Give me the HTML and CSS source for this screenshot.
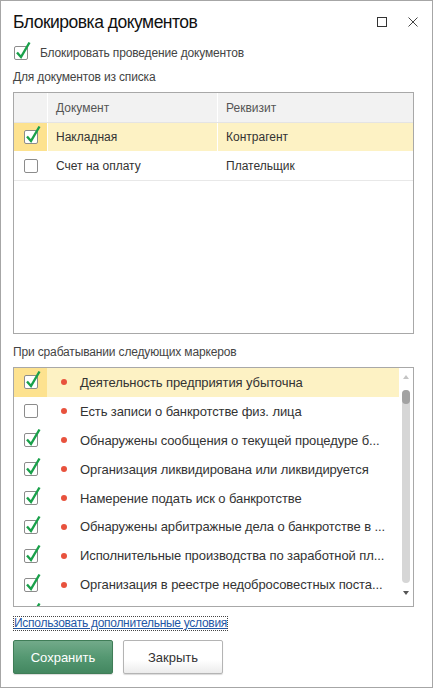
FILE: index.html
```html
<!DOCTYPE html>
<html lang="ru">
<head>
<meta charset="utf-8">
<title>Блокировка документов</title>
<link rel="stylesheet" href="styles.css">
</head>
<body>
<div class="window">
  <header class="titlebar">
    <h1 class="title">Блокировка документов</h1>
    <div class="tb-icons">
      <svg class="tb-icon" width="10" height="10" viewBox="0 0 10 10"><rect x="0.5" y="0.5" width="9" height="9" fill="none" stroke="#333"/></svg>
      <svg class="tb-icon" width="10" height="10" viewBox="0 0 10 10"><path d="M0.5 0.5L9.5 9.5M9.5 0.5L0.5 9.5" stroke="#444" fill="none"/></svg>
    </div>
  </header>

  <main class="content">
    <div class="check-row">
      <span class="cb"><svg class="tick" width="20" height="22" viewBox="0 0 20 22"><path d="M3 12.5L7 17L15.5 2.5"/></svg></span>
      <span class="check-label">Блокировать проведение документов</span>
    </div>

    <div class="section-label">Для документов из списка</div>

    <div class="grid">
      <div class="grid-row grid-head">
        <div class="gc gc-check"></div>
        <div class="gc gc-doc">Документ</div>
        <div class="gc gc-req">Реквизит</div>
      </div>
      <div class="grid-row selected">
        <div class="gc gc-check"><span class="cb"><svg class="tick" width="20" height="22" viewBox="0 0 20 22"><path d="M3 12.5L7 17L15.5 2.5"/></svg></span></div>
        <div class="gc gc-doc">Накладная</div>
        <div class="gc gc-req">Контрагент</div>
      </div>
      <div class="grid-row">
        <div class="gc gc-check"><span class="cb"></span></div>
        <div class="gc gc-doc">Счет на оплату</div>
        <div class="gc gc-req">Плательщик</div>
      </div>
    </div>

    <div class="section-label label-markers">При срабатывании следующих маркеров</div>

    <div class="list">
      <div class="list-rows">
        <div class="lr selected">
          <div class="lc-check"><span class="cb"><svg class="tick" width="20" height="22" viewBox="0 0 20 22"><path d="M3 12.5L7 17L15.5 2.5"/></svg></span></div>
          <span class="dot"></span><span class="lt">Деятельность предприятия убыточна</span>
        </div>
        <div class="lr">
          <div class="lc-check"><span class="cb"></span></div>
          <span class="dot"></span><span class="lt">Есть записи о банкротстве физ. лица</span>
        </div>
        <div class="lr">
          <div class="lc-check"><span class="cb"><svg class="tick" width="20" height="22" viewBox="0 0 20 22"><path d="M3 12.5L7 17L15.5 2.5"/></svg></span></div>
          <span class="dot"></span><span class="lt">Обнаружены сообщения о текущей процедуре б...</span>
        </div>
        <div class="lr">
          <div class="lc-check"><span class="cb"><svg class="tick" width="20" height="22" viewBox="0 0 20 22"><path d="M3 12.5L7 17L15.5 2.5"/></svg></span></div>
          <span class="dot"></span><span class="lt">Организация ликвидирована или ликвидируется</span>
        </div>
        <div class="lr">
          <div class="lc-check"><span class="cb"><svg class="tick" width="20" height="22" viewBox="0 0 20 22"><path d="M3 12.5L7 17L15.5 2.5"/></svg></span></div>
          <span class="dot"></span><span class="lt">Намерение подать иск о банкротстве</span>
        </div>
        <div class="lr">
          <div class="lc-check"><span class="cb"><svg class="tick" width="20" height="22" viewBox="0 0 20 22"><path d="M3 12.5L7 17L15.5 2.5"/></svg></span></div>
          <span class="dot"></span><span class="lt">Обнаружены арбитражные дела о банкротстве в ...</span>
        </div>
        <div class="lr">
          <div class="lc-check"><span class="cb"><svg class="tick" width="20" height="22" viewBox="0 0 20 22"><path d="M3 12.5L7 17L15.5 2.5"/></svg></span></div>
          <span class="dot"></span><span class="lt">Исполнительные производства по заработной пл...</span>
        </div>
        <div class="lr">
          <div class="lc-check"><span class="cb"><svg class="tick" width="20" height="22" viewBox="0 0 20 22"><path d="M3 12.5L7 17L15.5 2.5"/></svg></span></div>
          <span class="dot"></span><span class="lt">Организация в реестре недобросовестных поста...</span>
        </div>
        <div class="lr">
          <div class="lc-check"><span class="cb"><svg class="tick" width="20" height="22" viewBox="0 0 20 22"><path d="M3 12.5L7 17L15.5 2.5"/></svg></span></div>
        </div>
      </div>
      <div class="scrollbar">
        <span class="arrow-up"></span>
        <span class="track"><span class="thumb"></span></span>
        <span class="arrow-down"></span>
      </div>
    </div>

    <div class="link-row"><a class="link" href="#">Использовать дополнительные условия</a></div>

    <div class="buttons">
      <button class="btn btn-primary" type="button">Сохранить</button>
      <button class="btn" type="button">Закрыть</button>
    </div>
  </main>
</div>
</body>
</html>
```
FILE: styles.css
```css
* { box-sizing: border-box; }
html, body { margin: 0; padding: 0; background: #fff; }
body {
  font-family: "Liberation Sans", Arial, sans-serif;
  color: #333;
}
.window {
  width: 433px;
  height: 688px;
  border: 1px solid #a6a6a6;
  display: flex;
  flex-direction: column;
  background: #fff;
}
.titlebar {
  display: flex;
  justify-content: space-between;
  align-items: flex-start;
  padding: 9px 14px 0 12px;
  height: 33px;
}
.title {
  margin: 0;
  font-size: 17.5px;
  letter-spacing: -0.5px;
  font-weight: normal;
  line-height: 24px;
  color: #111;
}
.tb-icons {
  display: flex;
  gap: 21px;
  margin-top: 7px;
}
.tb-icon { display: block; }

.content {
  padding: 0 18px 0 12px;
  display: flex;
  flex-direction: column;
}
.check-row {
  margin-top: 9px;
  height: 20px;
  display: flex;
  align-items: center;
  padding-left: 1px;
}
.check-label {
  margin-left: 12px;
  font-size: 12px;
  letter-spacing: -0.15px;
  color: #444;
}
.cb {
  position: relative;
  display: block;
  width: 14px;
  height: 14px;
  border: 1px solid #8c8c8c;
  border-radius: 2px;
  background: #fff;
  flex: none;
}
.tick {
  position: absolute;
  left: -1px;
  top: -7px;
  overflow: visible;
}
.tick path {
  fill: none;
  stroke: #19a04a;
  stroke-width: 2.4;
  stroke-linejoin: miter;
}
.section-label {
  margin-top: 4px;
  height: 20px;
  line-height: 20px;
  font-size: 12px;
  letter-spacing: -0.15px;
  color: #444;
}
.label-markers { margin-top: 8px; }

.grid {
  margin-top: 5px;
  height: 242px;
  border: 1px solid #a8a8a8;
  font-size: 12px;
}
.grid-row {
  display: grid;
  grid-template-columns: 34px 170px 1fr;
  height: 29px;
  border-bottom: 1px solid #e8e8e8;
}
.grid-row.grid-head {
  height: 30px;
  background: #f2f2f2;
  color: #555;
  border-bottom: 1px solid #e4e4e4;
}
.gc {
  display: flex;
  align-items: center;
  padding-left: 8px;
  border-right: 1px solid #fff;
}
.gc-req { border-right: none; }
.gc.gc-check {
  padding-left: 0;
  justify-content: center;
}
.grid-row.selected { background: #fdf2c4; border-bottom-color: #fff; }
.grid-row.selected .gc-check { background: #fde28f; }

.list {
  margin-top: 5px;
  height: 240px;
  border: 1px solid #a8a8a8;
  display: flex;
  overflow: hidden;
}
.list-rows {
  flex: 1;
  overflow: hidden;
}
.lr {
  height: 28.9px;
  display: flex;
  align-items: center;
  font-size: 13px;
  letter-spacing: -0.1px;
  color: #333;
  white-space: nowrap;
}
.lr.selected { background: #fdf2c4; }
.lc-check {
  width: 33px;
  height: 100%;
  display: flex;
  align-items: center;
  justify-content: center;
  flex: none;
}
.lr.selected .lc-check { background: #fde28f; }
.dot {
  width: 6px;
  height: 6px;
  border-radius: 50%;
  background: #e8523d;
  margin-left: 14px;
  flex: none;
}
.lt { margin-left: 13px; }

.scrollbar {
  width: 14px;
  flex: none;
  display: flex;
  flex-direction: column;
  align-items: center;
}
.arrow-up {
  margin-top: 7px;
  width: 0;
  height: 0;
  border-left: 3px solid transparent;
  border-right: 3px solid transparent;
  border-bottom: 4px solid #c4c4c4;
}
.track {
  margin-top: 11px;
  width: 8px;
  height: 193px;
  border-radius: 4px;
  background: #d6d6d6;
  display: block;
}
.thumb {
  display: block;
  width: 8px;
  height: 14px;
  border-radius: 4px;
  background: #a2a2a2;
}
.arrow-down {
  margin-top: 8px;
  width: 0;
  height: 0;
  border-left: 3px solid transparent;
  border-right: 3px solid transparent;
  border-top: 4px solid #555;
}

.link-row {
  margin-top: 9px;
  height: 15px;
  display: flex;
}
.link {
  display: block;
  border: 1px dotted #444;
  line-height: 13px;
  font-size: 12px;
  letter-spacing: -0.28px;
  color: #1f57a6;
  text-decoration: underline;
}

.buttons {
  margin-top: 9px;
  display: flex;
  gap: 10px;
}
.btn {
  width: 100px;
  height: 34px;
  border: 1px solid #b4b4b4;
  border-radius: 2px;
  background: linear-gradient(#ffffff 0%, #ffffff 60%, #ececec 100%);
  box-shadow: 0 1px 1px rgba(0,0,0,0.15);
  font-family: "Liberation Sans", Arial, sans-serif;
  font-size: 13px;
  color: #333;
  padding: 0;
}
.btn-primary {
  border-color: #3f7d57;
  background: linear-gradient(#72aa8a 0%, #559872 50%, #438760 100%);
  color: #fff;
}
```
